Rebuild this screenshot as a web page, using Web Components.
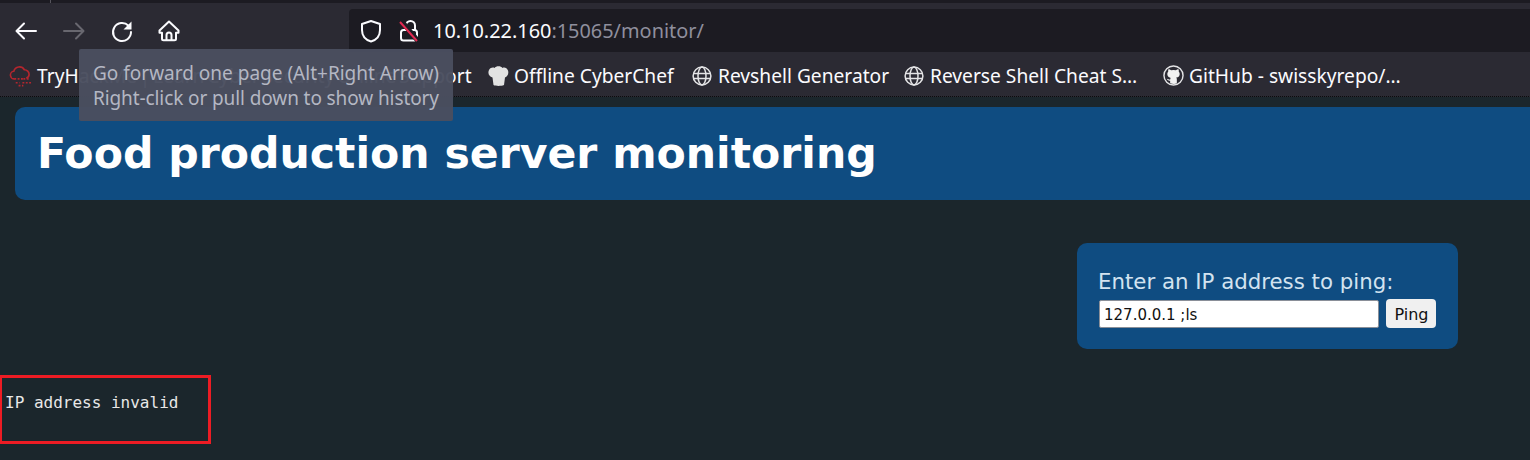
<!DOCTYPE html>
<html><head><meta charset="utf-8"><style>
html,body{margin:0;padding:0;background:#1b262c;height:460px;overflow:hidden}
</style></head><body>
<browser-chrome></browser-chrome>
<monitor-page>
<page-banner>Food production server monitoring</page-banner>
<ping-form></ping-form>
<ping-output>IP address invalid</ping-output>
</monitor-page>
<script>
const globe='<svg style="display:block" width="20" height="20" viewBox="0 0 20 20" fill="none" stroke="#e4e4e6" stroke-width="1.5"><circle cx="10" cy="10" r="8.9"/><ellipse cx="10" cy="10" rx="4" ry="8.9"/><path d="M1.500 7.600h17M1.500 12.400h17"/></svg>';
function def(name,html){customElements.define(name,class extends HTMLElement{constructor(){super();this.attachShadow({mode:'open'}).innerHTML=html}})}
def('nav-icon','<style>:host{display:flex;width:48px;height:49px;align-items:center;justify-content:center;padding-top:6px;box-sizing:border-box}</style><slot></slot>');
def('book-mark','<style>:host{display:inline-flex;align-items:center;gap:5px;white-space:nowrap;flex:none}</style><slot name="i"></slot><slot></slot>');
def('browser-chrome',`<style>
:host{display:block;font-family:"Noto Sans",sans-serif;position:relative}
.tabs{height:3px;background:#1c1b22;position:relative}
.tabs i{display:block;width:1px;height:3px;background:#55545c;margin-left:50px}
.bar{height:49px;background:#2b2a33;display:flex;align-items:center;padding-left:2px;box-sizing:border-box}
.url{flex:1;height:43px;align-self:flex-start;margin-top:6px;background:#1c1b22;border-radius:4px 0 0 0;display:flex;align-items:center;padding-left:11px;box-sizing:border-box;margin-left:156px}
.shield{margin-right:17px}
.addr{font-size:19.9px;color:#fbfbfe;white-space:nowrap;margin-left:14px}
.addr span{color:#8f8f9d}
.marks{height:44px;background:#2b2a33;display:flex;align-items:center;font-size:19.2px;color:#fbfbfe;padding:3px 0 0 9px;box-sizing:border-box;overflow:hidden}
.rule{height:1px;background-image:linear-gradient(90deg,#0b0b0d 50%,#2b2a33 50%);background-size:2px 1px}
.tip{position:absolute;left:79px;top:49px;width:374px;height:72px;box-sizing:border-box;background:rgba(74,78,95,.97);border-radius:2px;color:#b4b7c3;font-size:19px;line-height:24.5px;padding:12px 0 0 14px;white-space:nowrap}
.tip span{letter-spacing:-.1px}
</style>
<div class="tabs"><i></i></div>
<div class="bar">
<nav-icon><svg width="24" height="24" viewBox="0 0 24 24" fill="none" stroke="#fbfbfe" stroke-width="2" stroke-linecap="round" stroke-linejoin="round"><path d="M22 12H3M10 4.500L2.500 12l7.500 7.500"/></svg></nav-icon>
<nav-icon><svg width="24" height="24" viewBox="0 0 24 24" fill="none" stroke="#68676f" stroke-width="2" stroke-linecap="round" stroke-linejoin="round"><path d="M2 12h19M14 4.500l7.500 7.500-7.500 7.500"/></svg></nav-icon>
<nav-icon><svg width="24" height="24" viewBox="0 0 24 24" fill="none" stroke="#fbfbfe" stroke-width="2" stroke-linecap="round"><path d="M18.500 6.800A9 9 0 1 0 21 13"/><path d="M21.500 2.500v8h-8z" fill="#fbfbfe" stroke="none"/></svg></nav-icon>
<nav-icon style="margin-left:-1px"><svg width="24" height="24" viewBox="0 0 24 24" fill="none" stroke="#fbfbfe" stroke-width="2" stroke-linejoin="round"><path d="M12 2.500 2.500 11.500v2.200H5v6a1.500 1.500 0 0 0 1.500 1.500h11a1.500 1.500 0 0 0 1.500-1.500v-6h2.500v-2.200z"/><path d="M9.500 21v-5a2.500 2.500 0 0 1 5 0v5"/></svg></nav-icon>
<div class="url">
<svg class="shield" width="22" height="24" viewBox="0 0 22 24" fill="none" stroke="#fbfbfe" stroke-width="2" stroke-linejoin="round"><path d="M11 2 2 5v6c0 6 4 10 9 11.500 5-1.500 9-5.500 9-11.500V5z"/></svg>
<svg width="20" height="22" viewBox="0 0 20 22" fill="none"><path d="M7 8V5.500a4.500 4.500 0 0 1 9 0V10" stroke="#fbfbfe" stroke-width="2"/><rect x="2" y="10" width="16" height="10.500" rx="2.500" stroke="#fbfbfe" stroke-width="2"/><path d="M2.500 1 19 21" stroke="#1c1b22" stroke-width="5"/><path d="M1 2l17 19" stroke="#e22850" stroke-width="2"/></svg>
<div class="addr">10.10.22.160<span>:15065/monitor/</span></div>
</div>
</div>
<div class="marks">
<book-mark style="width:479px;word-spacing:-2.3px"><svg slot="i" style="display:block" width="23" height="24" viewBox="0 0 24 24" fill="none" stroke="#b3262e" stroke-width="1.700"><path d="M6 15a4 4 0 0 1-1-8 6 6 0 0 1 11-1.500A5 5 0 0 1 21 10.500a4 4 0 0 1-3 3.500"/><path d="M5.500 15H15M15 15h6M14 19h9M7 19h4M10 22h5" stroke-dasharray="2 1.500"/></svg>TryHackMe | Learn Cyber Security Online Support</book-mark>
<book-mark style="width:204px"><svg slot="i" style="display:block" width="21" height="22" viewBox="0 0 21 22"><path d="M4.500 12.500C1 11.500-.5 8 1 5 2.500 2.500 5 2 6.500 3 8 .5 13 .5 14.500 3 16.500 2 19 3 20 5.500 21 8.500 19.500 11.500 17 12.500L16 20c-3 1.200-8 1.200-10.500 0z" fill="#e2e2e2"/></svg>Offline CyberChef</book-mark>
<book-mark style="width:212px;gap:6px"><span slot="i">${globe}</span>Revshell Generator</book-mark>
<book-mark style="width:259px;gap:6px"><span slot="i">${globe}</span>Reverse Shell Cheat S…</book-mark>
<book-mark><svg slot="i" style="display:block" width="21" height="21" viewBox="0 0 22 22"><circle cx="11" cy="11" r="10" fill="#2b2a33" stroke="#e4e4e6" stroke-width="1.500"/><path d="M7.500 19.500v-3c-2 .3-3-1-3.500-2 1.500 0 2 1 3.500 1 0-1 .3-1.500.7-1.800C5.500 13 4.500 11.500 4.500 9.500c0-1 .3-2 1-2.700-.2-.8 0-2 .3-2.300 1 0 2 .6 2.800 1.100a9 9 0 0 1 4.800 0c.8-.5 1.800-1.100 2.800-1.100.3.300.5 1.500.3 2.300.7.700 1 1.700 1 2.700 0 2-1 3.500-3.700 3.700.5.400.7 1 .7 1.800v4.500a10 10 0 0 1-7-.4z" fill="#f2f2f2"/></svg>GitHub - swisskyrepo/…</book-mark>
</div>
<div class="rule"></div>
<div class="tip">Go forward one page (Alt+Right Arrow)<br><span>Right-click or pull down to show history</span></div>`);
def('monitor-page','<style>:host{display:flex;flex-direction:column;height:363px;box-sizing:border-box;padding-top:10px;color:#fff;font-family:"DejaVu Sans",sans-serif;overflow:hidden}</style><slot></slot>');
def('page-banner','<style>:host{display:block;height:93px;margin-left:15px;margin-right:-30px;background:#0f4c81;border-radius:10px;box-sizing:border-box;padding:0 22px;font:bold 42.6px/93px "DejaVu Sans",sans-serif;color:#fff;white-space:nowrap;flex:none}</style><slot></slot>');
def('ping-form',`<style>:host{display:block;align-self:flex-end;width:381px;height:106px;margin:43px 72px 0 0;background:#0f4c81;border-radius:10px;box-sizing:border-box;padding:25px 21px 0 22px;flex:none}
.l{font-size:21.3px;line-height:28px;color:#d3e3f0;white-space:nowrap;margin-left:-1px}
.r{display:flex;gap:7px;align-items:center;margin-top:3px}
.i{box-sizing:border-box;width:280px;height:28px;background:#fff;border:1px solid #8a8f98;border-radius:2px;color:#111;font:15px "DejaVu Sans",sans-serif;padding:2px 4px 0;line-height:24px}
.b{box-sizing:border-box;width:50px;height:29px;background:#f0f0f0;border-radius:4px;color:#111;font:16px/29px "DejaVu Sans",sans-serif;text-align:center;padding-top:1px;padding-left:1px}
</style><div class="l">Enter an IP address to ping:</div><div class="r"><div class="i">127.0.0.1 ;ls</div><div class="b">Ping</div></div>`);
def('ping-output','<style>:host{display:block;box-sizing:border-box;width:212px;height:69px;margin-top:26px;margin-left:-1px;border:3px solid #ed1c24;padding:15px 0 0 3px;font:16px/20px "DejaVu Sans Mono",monospace;color:#e8e8e8;white-space:nowrap;flex:none}</style><slot></slot>');
</script>
</body></html>
